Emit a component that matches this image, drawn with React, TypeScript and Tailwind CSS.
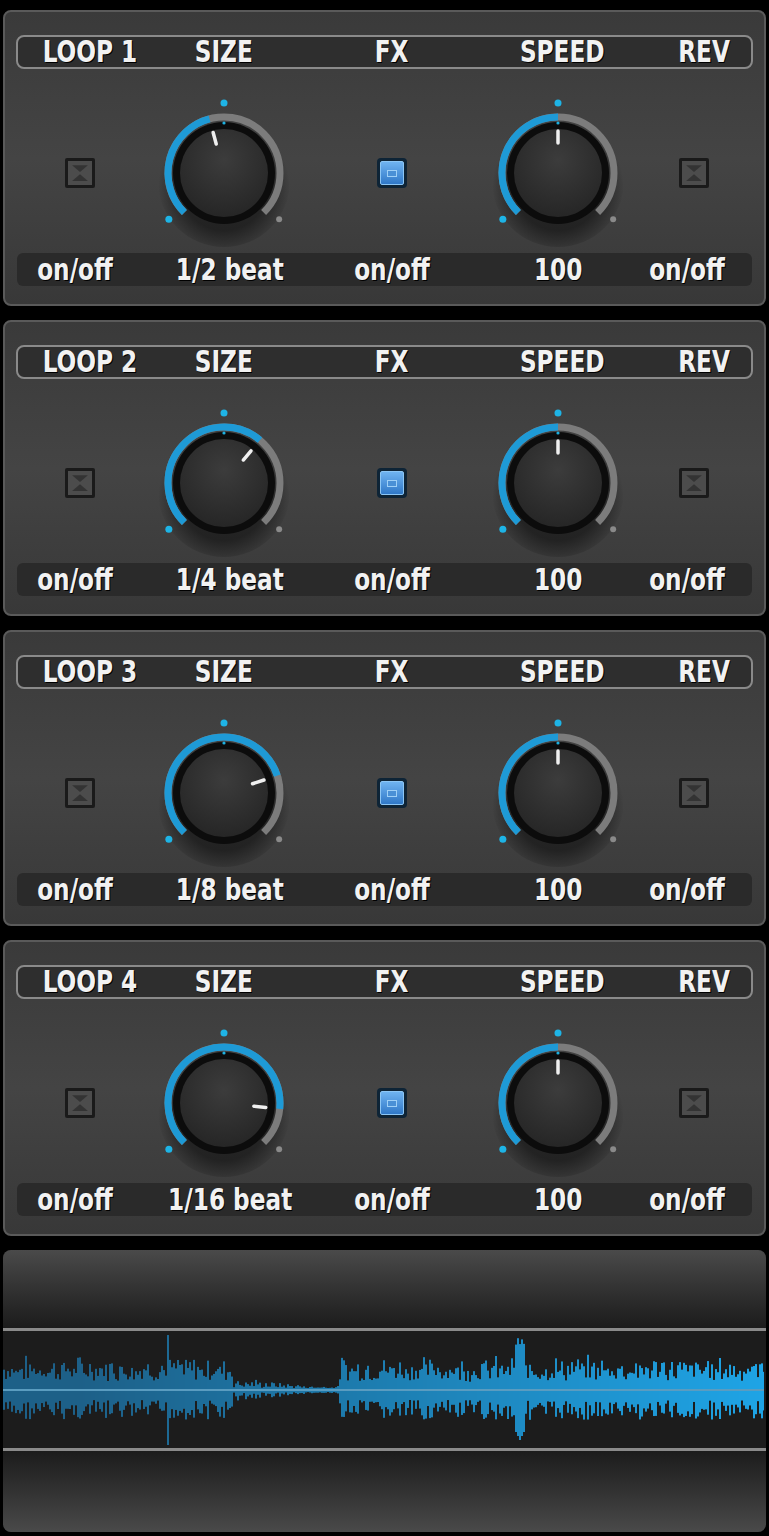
import React from "react";

const F = { fontFamily: '"DejaVu Sans Condensed","DejaVu Sans",sans-serif' };

function polar(cx: number, cy: number, r: number, deg: number) {
  const a = ((deg - 90) * Math.PI) / 180;
  return [cx + r * Math.cos(a), cy + r * Math.sin(a)];
}
function arc(cx: number, cy: number, r: number, a0: number, a1: number) {
  const [x0, y0] = polar(cx, cy, r, a0);
  const [x1, y1] = polar(cx, cy, r, a1);
  const large = a1 - a0 > 180 ? 1 : 0;
  return `M${x0} ${y0} A${r} ${r} 0 ${large} 1 ${x1} ${y1}`;
}

function Knob({ angle }: { angle: number }) {
  const c = 80;
  const [px0, py0] = polar(c, c, 30, angle);
  const [px1, py1] = polar(c, c, 42, angle);
  const [dbx, dby] = polar(c, c, 72, -130);
  const [dex, dey] = polar(c, c, 72, 130);
  return (
    <svg width="160" height="160" viewBox="0 0 160 160" className="shrink-0">
      <defs>
        <radialGradient id="kb" cx="50%" cy="35%" r="65%">
          <stop offset="0%" stopColor="#3c3c3c" />
          <stop offset="100%" stopColor="#262626" />
        </radialGradient>
        <radialGradient id="sh" cx="50%" cy="55%" r="50%">
          <stop offset="65%" stopColor="#000" stopOpacity="0.45" />
          <stop offset="100%" stopColor="#000" stopOpacity="0" />
        </radialGradient>
      </defs>
      <circle cx={c} cy={c + 8} r={66} fill="url(#sh)" />
      <path d={arc(c, c, 56, -135, 135)} stroke="#7c7c7c" strokeWidth="7" fill="none" />
      <path d={arc(c, c, 56, -135, angle)} stroke="#1e9ad6" strokeWidth="7" fill="none" />
      <circle cx={c} cy={c} r={51} fill="#0c0c0c" />
      <circle cx={c} cy={c} r={44} fill="url(#kb)" />
      <circle cx={c} cy={c - 50} r={1.6} fill="#1eb0e0" />
      <line x1={px0} y1={py0} x2={px1} y2={py1} stroke="#f0f0f0" strokeWidth="3.5" strokeLinecap="round" />
      <circle cx={c} cy={c - 70} r={3.5} fill="#1eb4e6" />
      <circle cx={dbx} cy={dby} r={3.5} fill="#1eb4e6" />
      <circle cx={dex} cy={dey} r={3} fill={angle >= 125 ? "#1eb4e6" : "#8a8a8a"} />
    </svg>
  );
}

function Check({ on }: { on?: boolean }) {
  return on ? (
    <div className="w-[30px] h-[30px] rounded-[4px] bg-[#0e2436] p-[3px]">
      <div className="w-full h-full rounded-[2px] bg-gradient-to-b from-[#6fb3f0] to-[#2f78c8] border border-[#8cc6f5] flex items-center justify-center">
        <div className="w-[10px] h-[7px] bg-[#4a90d6] border border-[#9fd0f7]" />
      </div>
    </div>
  ) : (
    <div className="w-[30px] h-[30px] rounded-[2px] bg-[#1a1a1a] p-[3px]">
      <div className="w-full h-full bg-[#4c4c4c] flex items-center justify-center">
        <svg width="18" height="18" viewBox="0 0 16 16">
          <polygon points="1,1 15,1 8,7" fill="#333" />
          <polygon points="1,15 15,15 8,9" fill="#333" />
        </svg>
      </div>
    </div>
  );
}

function Txt({ children }: { children: React.ReactNode }) {
  return (
    <span className="inline-block whitespace-nowrap text-[#f2f2f2] font-bold text-[30px] leading-none scale-x-[0.86] [text-shadow:1px_1px_0_#000]">
      {children}
    </span>
  );
}

const COLS = ["w-[126px]", "w-[162px]", "w-[174px]", "w-[158px]", "w-[115px]"];

function Row({ items, cls, offsets }: { items: React.ReactNode[]; cls: string; offsets?: string[] }) {
  return (
    <div className={"flex items-center " + cls}>
      {items.map((it, i) => (
        <div key={i} className={COLS[i] + " shrink-0 flex justify-center " + (offsets ? offsets[i] : "")}>
          {it}
        </div>
      ))}
    </div>
  );
}

function Loop({ n, size, angle }: { n: number; size: string; angle: number }) {
  return (
    <div className="mx-[3px] rounded-[8px] border-2 border-[#5a5a5a] bg-gradient-to-b from-[#3a3a3a] via-[#444] to-[#383838] h-[296px] pt-[23px] px-[12px] flex flex-col" style={F}>
      <div className="h-[44px] rounded-[8px] border-2 border-[#8a8a8a] bg-[#2e2e2e] -mx-[1px] flex items-center">
        <Row
          cls="-ml-[1px]"
          items={[<Txt>LOOP {n}</Txt>, <Txt>SIZE</Txt>, <Txt>FX</Txt>, <Txt>SPEED</Txt>, <Txt>REV</Txt>]}
          offsets={["pl-[20px]", "", "", "pl-[8px]", "pl-[20px]"]}
        />
      </div>
      <Row
        cls="flex-1 pt-[24px]"
        items={[<Check />, <Knob angle={angle} />, <Check on />, <Knob angle={0} />, <Check />]}
        offsets={["", "", "", "", "pr-[2px]"]}
      />
      <div className="h-[44px] mb-[18px] rounded-[6px] bg-[#2a2a2a] flex items-center">
        <Row
          cls=""
          items={[<Txt>on/off</Txt>, <Txt>{size}</Txt>, <Txt>on/off</Txt>, <Txt>100</Txt>, <Txt>on/off</Txt>]}
          offsets={["pr-[10px]", "pl-[12px]", "", "", "pr-[14px]"]}
        />
      </div>
    </div>
  );
}

function Wave() {
  let s = 7;
  const rnd = () => {
    s = (s * 9301 + 49297) % 233280;
    return s / 233280;
  };
  const bars: React.ReactElement[] = [];
  const W = 761;
  for (let i = 0; i < W; i += 2) {
    const t = i / W;
    let amp = 0;
    if (t < 0.3) amp = 10 + rnd() * 20;
    else if (t < 0.44) amp = 2 + rnd() * 10 * Math.max(0.15, 1 - (t - 0.3) / 0.12);
    else amp = 10 + rnd() * 20;
    if (Math.abs(i - 164) < 2) amp = 55;
    if (Math.abs(i - 516) < 6) amp = 50 - Math.abs(i - 516) * 2;
    const g = Math.min(1, Math.max(0, (t - 0.1) / 0.9));
    const r = Math.round(0x1d + (0x1e - 0x1d) * g);
    const gg = Math.round(0x60 + (0xa4 - 0x60) * g);
    const b = Math.round(0x88 + (0xe6 - 0x88) * g);
    const col = `rgb(${r},${gg},${b})`;
    const up = amp * (0.8 + rnd() * 0.4);
    bars.push(<rect key={i} x={i} y={60 - up} width={2} height={up + amp} fill={col} />);
  }
  return (
    <svg width={W} height={120} viewBox={`0 0 ${W} 120`} className="block">
      {bars}
      <line x1="0" y1="60" x2={W} y2="60" stroke="#5a9cc0" strokeWidth="2" />
    </svg>
  );
}

export default function App() {
  const loops = [
    { size: "1/2 beat", angle: -15 },
    { size: "1/4 beat", angle: 40 },
    { size: "1/8 beat", angle: 72 },
    { size: "1/16 beat", angle: 96 },
  ];
  return (
    <div className="w-[769px] h-[1536px] bg-black pt-[10px] flex flex-col gap-[14px]">
      {loops.map((l, i) => (
        <Loop key={i} n={i + 1} size={l.size} angle={l.angle} />
      ))}
      <div className="mx-[3px] h-[282px] rounded-[8px] overflow-hidden flex flex-col bg-[#1c1c1c]">
        <div className="h-[78px] bg-gradient-to-b from-[#4a4a4a] to-[#1c1c1c]" />
        <div className="h-[3px] bg-[#8a8a8a]" />
        <div className="h-[117px] flex items-center overflow-hidden"><Wave /></div>
        <div className="h-[3px] bg-[#8a8a8a]" />
        <div className="flex-1 bg-gradient-to-b from-[#1c1c1c] to-[#4a4a4a]" />
      </div>
    </div>
  );
}
